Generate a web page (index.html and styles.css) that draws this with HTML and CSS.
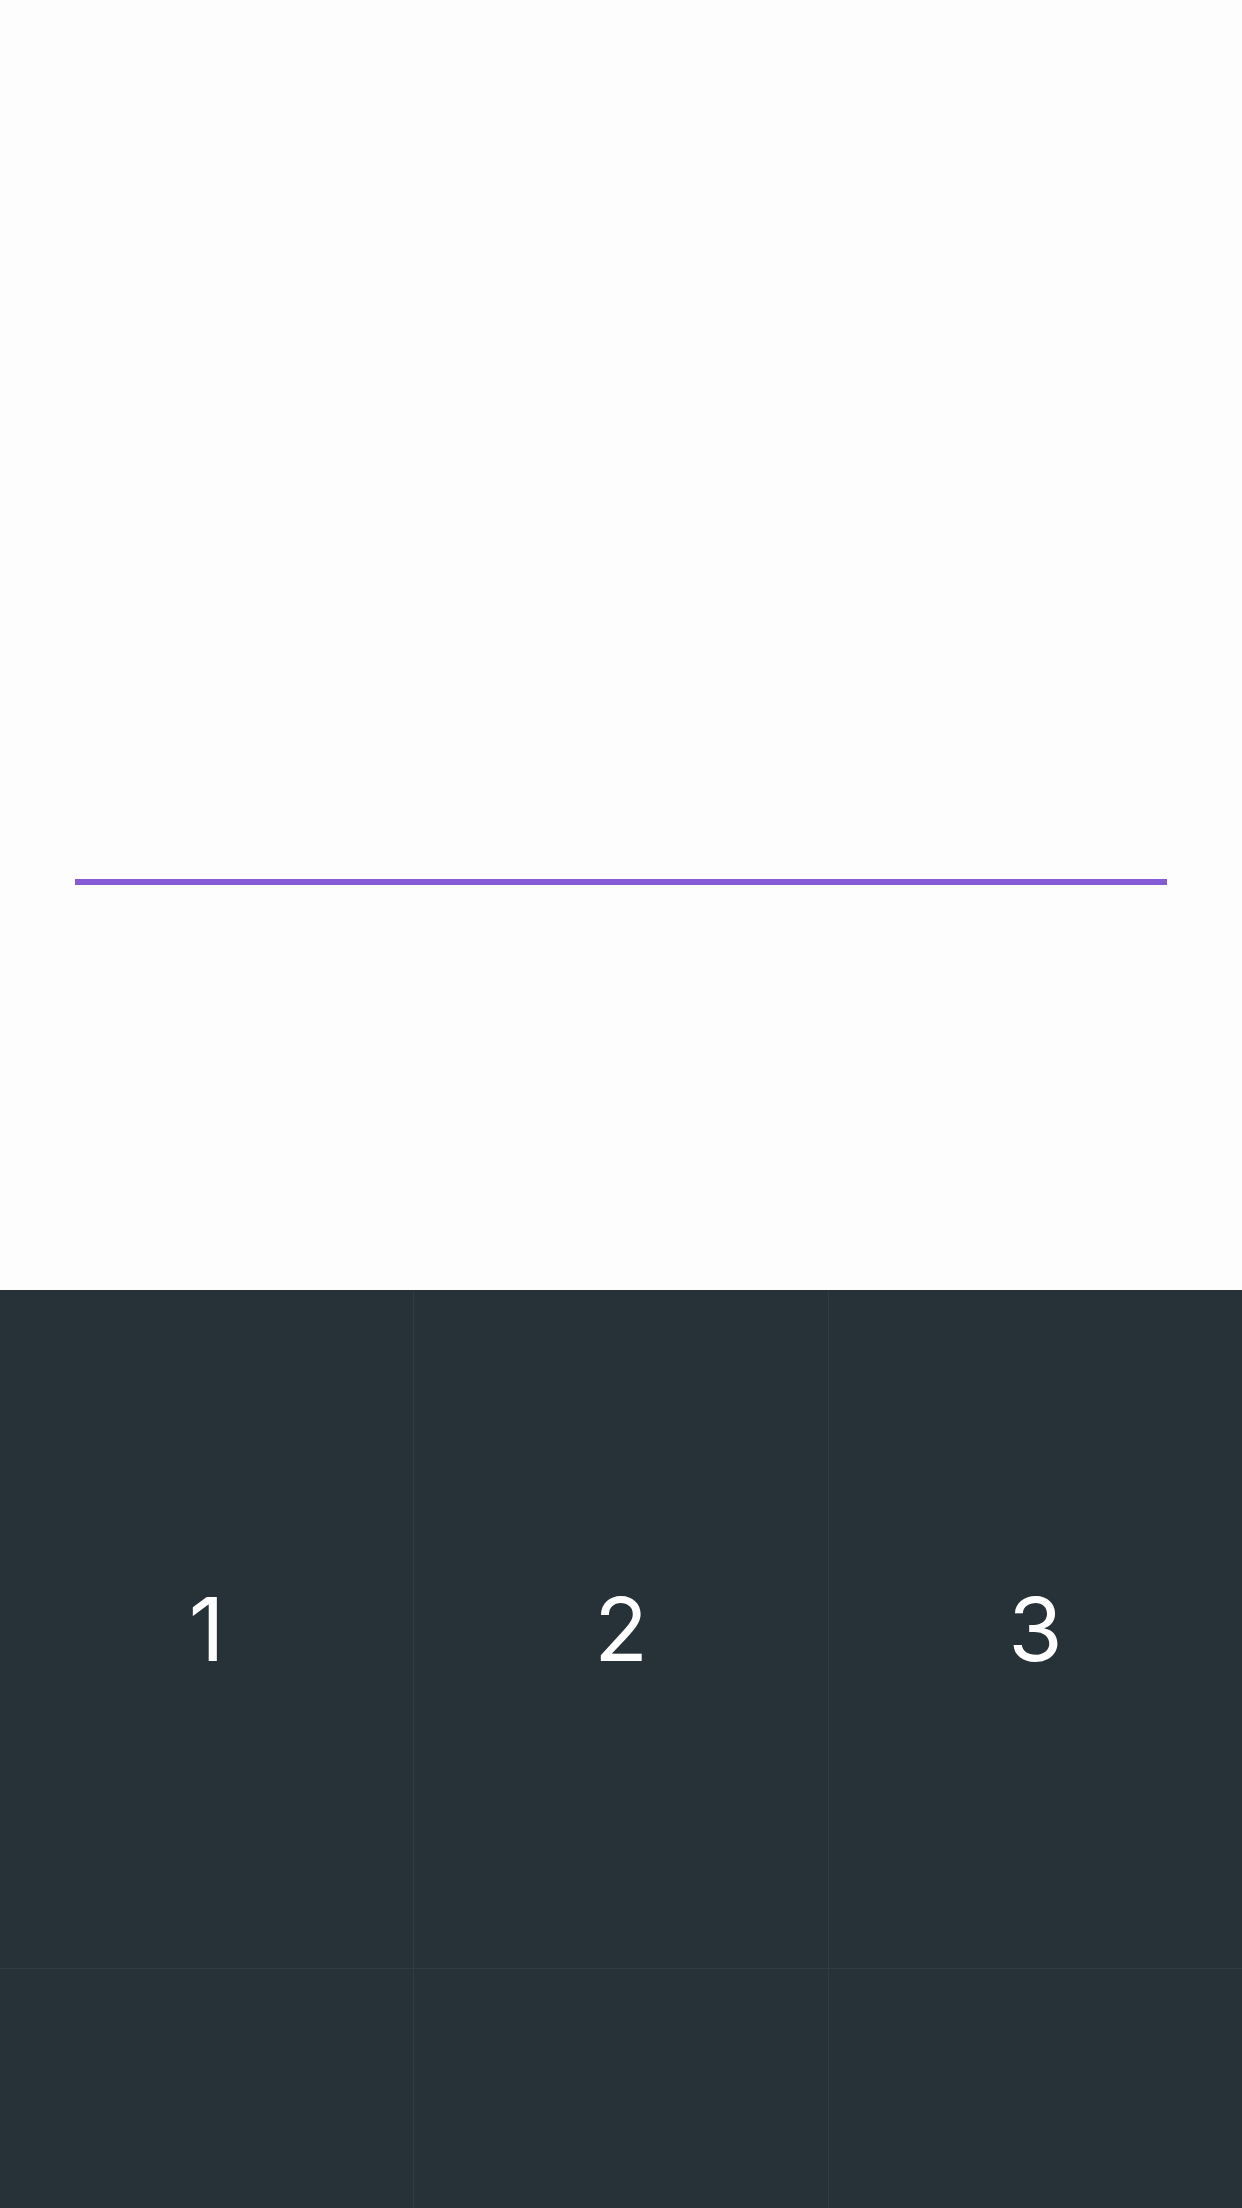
FILE: index.html
```html
<!DOCTYPE html>
<html>
<head>
<meta charset="utf-8">
<link rel="stylesheet" href="styles.css">
</head>
<body>
<div class="screen">
  <section class="display">
    <div class="input-line"></div>
  </section>
  <section class="keypad">
    <div class="key">1</div>
    <div class="key">2</div>
    <div class="key">3</div>
    <div class="key"></div>
    <div class="key"></div>
    <div class="key"></div>
  </section>
</div>
</body>
</html>
```
FILE: styles.css
```css
html, body {
  margin: 0;
  padding: 0;
  background: #fdfdfd;
}
.screen {
  width: 1242px;
  height: 2208px;
  overflow: hidden;
  display: flex;
  flex-direction: column;
  font-family: Inter, Roboto, sans-serif;
}
.display {
  flex: 0 0 1290px;
  height: 1290px;
  box-sizing: border-box;
  padding: 879px 75px 0 75px;
  background: #fdfdfd;
}
.input-line {
  height: 6px;
  background: #865cd6;
}
.keypad {
  flex: 0 0 auto;
  display: grid;
  grid-template-columns: repeat(3, 1fr);
  grid-template-rows: 678px 678px;
  gap: 1px;
  background: #2f3c43;
}
.key {
  background: #263238;
  color: #ffffff;
  font-size: 88px;
  font-weight: 400;
  display: flex;
  align-items: center;
  justify-content: center;
}
```
